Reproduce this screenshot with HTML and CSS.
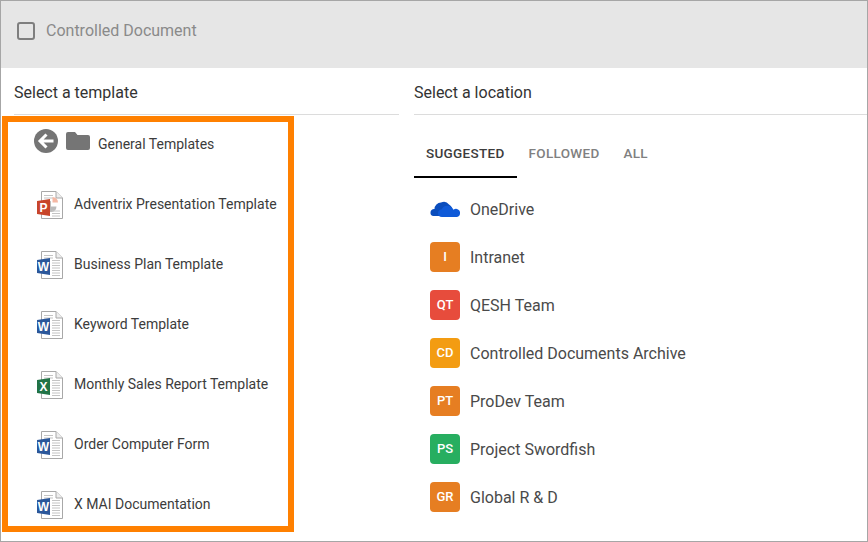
FILE: index.html
```html
<!DOCTYPE html>
<html lang="en">
<head>
<meta charset="utf-8">
<title>Controlled Document</title>
<link rel="stylesheet" href="styles.css">
</head>
<body>
<svg class="defs" width="0" height="0" aria-hidden="true">
  <defs>
    <symbol id="page" viewBox="0 0 26 28">
      <path d="M4.500.5H19L25.500 7V27.500H4.500Z" fill="#fff" stroke="#a8a8a8"/>
      <path d="M19 .5V7H25.500" fill="#eee" stroke="#a8a8a8"/>
      <path d="M7 4.500H16M7 7H16" stroke="#c4c4c4"/>
    </symbol>
    <symbol id="lines" viewBox="0 0 26 28">
      <path d="M15 9.500H23M15 12H23M15 14.500H23M15 17H23M15 19.500H23M15 22H23M15 24.500H23" stroke="#c4c4c4"/>
    </symbol>
  </defs>
</svg>
<main class="frame">
  <header class="top">
    <span class="checkbox"></span>
    <span class="top-label">Controlled Document</span>
  </header>
  <div class="columns">
    <section class="col-left">
      <h2 class="col-title">Select a template</h2>
      <div class="highlight">
        <div class="row row-head">
          <svg class="back" viewBox="0 0 24 24"><circle cx="12" cy="12" r="12" fill="#757575"/><path d="M19.500 12H7M12.500 5.500L6 12L12.500 18.500" fill="none" stroke="#fff" stroke-width="3"/></svg>
          <svg class="folder" viewBox="0 0 24 18"><path d="M2 0H9L11.500 3H22A2 2 0 0 1 24 5V16A2 2 0 0 1 22 18H2A2 2 0 0 1 0 16V2A2 2 0 0 1 2 0Z" fill="#757575"/></svg>
          <span class="row-text">General Templates</span>
        </div>
        <div class="row">
          <svg class="file" viewBox="0 0 26 28"><use href="#page"/><path d="M14 10A5.500 5.500 0 1 0 19.500 15.500H14Z" fill="#bbb"/><path d="M15.500 6A5.500 5.500 0 0 1 21 11.500H15.500Z" fill="#f4b8a4"/><path d="M15 20H23M15 22.500H23M15 25H23" stroke="#c4c4c4"/><path d="M0 10L13 8V25L0 23Z" fill="#c8452a"/><text class="glyph" x="6.500" y="21">P</text></svg>
          <span class="row-text">Adventrix Presentation Template</span>
        </div>
        <div class="row">
          <svg class="file" viewBox="0 0 26 28"><use href="#page"/><use href="#lines"/><path d="M0 9L13 7V24L0 22Z" fill="#2b579a"/><text class="glyph" x="6.500" y="20">W</text></svg>
          <span class="row-text">Business Plan Template</span>
        </div>
        <div class="row">
          <svg class="file" viewBox="0 0 26 28"><use href="#page"/><use href="#lines"/><path d="M0 9L13 7V24L0 22Z" fill="#2b579a"/><text class="glyph" x="6.500" y="20">W</text></svg>
          <span class="row-text">Keyword Template</span>
        </div>
        <div class="row">
          <svg class="file" viewBox="0 0 26 28"><use href="#page"/><use href="#lines"/><path d="M0 9L13 7V24L0 22Z" fill="#217346"/><text class="glyph" x="6.500" y="20">X</text></svg>
          <span class="row-text">Monthly Sales Report Template</span>
        </div>
        <div class="row">
          <svg class="file" viewBox="0 0 26 28"><use href="#page"/><use href="#lines"/><path d="M0 9L13 7V24L0 22Z" fill="#2b579a"/><text class="glyph" x="6.500" y="20">W</text></svg>
          <span class="row-text">Order Computer Form</span>
        </div>
        <div class="row">
          <svg class="file" viewBox="0 0 26 28"><use href="#page"/><use href="#lines"/><path d="M0 9L13 7V24L0 22Z" fill="#2b579a"/><text class="glyph" x="6.500" y="20">W</text></svg>
          <span class="row-text">X MAI Documentation</span>
        </div>
      </div>
    </section>
    <section class="col-right">
      <h2 class="col-title">Select a location</h2>
      <nav class="tabs">
        <span class="tab tab-active">Suggested</span>
        <span class="tab">Followed</span>
        <span class="tab">All</span>
      </nav>
      <ul class="sites">
        <li class="site">
          <svg class="onedrive" viewBox="0 0 30 18"><path d="M11 2.500A6.500 6.500 0 0 1 19 4.500A6 6 0 0 1 22 8L12 16H3.500A3.300 3.300 0 0 1 .5 12.500C.5 10 2.500 8.800 4.500 9A6.500 6.500 0 0 1 11 2.500Z" fill="#0a4dbd"/><path d="M12 17A4 4 0 0 1 8 13C8 10.500 10 9.300 11.500 9.500A6.500 6.500 0 0 1 23.500 9.800A4 4 0 0 1 30 13.500A3.500 3.500 0 0 1 27 17Z" fill="#0f5ad8"/></svg>
          <span class="site-name">OneDrive</span>
        </li>
        <li class="site"><span class="badge badge-orange">I</span><span class="site-name">Intranet</span></li>
        <li class="site"><span class="badge badge-red">QT</span><span class="site-name">QESH Team</span></li>
        <li class="site"><span class="badge badge-yellow">CD</span><span class="site-name">Controlled Documents Archive</span></li>
        <li class="site"><span class="badge badge-orange">PT</span><span class="site-name">ProDev Team</span></li>
        <li class="site"><span class="badge badge-green">PS</span><span class="site-name">Project Swordfish</span></li>
        <li class="site"><span class="badge badge-orange">GR</span><span class="site-name">Global R &amp; D</span></li>
      </ul>
    </section>
  </div>
</main>
</body>
</html>
```

FILE: styles.css
```css
* {
  box-sizing: border-box;
}

html,
body {
  margin: 0;
  padding: 0;
  background: #fff;
}

body {
  font-family: Roboto, "Liberation Sans", sans-serif;
  overflow: hidden;
}

.defs {
  position: absolute;
}

.frame {
  width: 868px;
  height: 542px;
  border: 1px solid #a6a6a6;
  display: flex;
  flex-direction: column;
  overflow: hidden;
}

.top {
  height: 67px;
  flex: none;
  background: #e6e6e6;
  display: flex;
  align-items: center;
  padding: 0 0 8px 16px;
}

.checkbox {
  width: 18px;
  height: 18px;
  border: 2px solid #7f7f7f;
  border-radius: 3px;
  margin-right: 11px;
}

.top-label {
  font-size: 16px;
  color: #8a8a8a;
}

.columns {
  flex: 1;
  display: flex;
  min-height: 0;
}

.col-left {
  width: 398px;
  flex: none;
  padding-left: 1px;
}

.col-right {
  flex: 1;
  padding-left: 15px;
}

.col-title {
  margin: 0;
  height: 47px;
  line-height: 49px;
  font-size: 16px;
  font-weight: 400;
  color: #333;
  border-bottom: 1px solid #dcdcdc;
}

.col-left .col-title {
  margin-left: 12px;
}

.highlight {
  width: 292px;
  height: 416px;
  margin-top: 1px;
  border: 6px solid #ff8000;
  display: flex;
  flex-direction: column;
  gap: 16px;
  padding: 0 0 0 29px;
}

.row {
  height: 44px;
  display: flex;
  align-items: center;
  flex: none;
}

.row-head {
  margin-left: -3px;
}

.back {
  width: 24px;
  height: 24px;
  margin-right: 8px;
  margin-top: -6px;
}

.folder {
  width: 24px;
  height: 18px;
  margin-right: 8px;
  margin-top: -6px;
}

.file {
  width: 26px;
  height: 28px;
  margin-right: 11px;
  margin-top: 2px;
  flex: none;
}

.glyph {
  font-family: "Liberation Sans", sans-serif;
  font-weight: 700;
  font-size: 12px;
  fill: #fff;
  text-anchor: middle;
}

.row-text {
  font-size: 14px;
  color: #3c3c3c;
  white-space: nowrap;
}

.tabs {
  display: flex;
  height: 63px;
}

.tab {
  padding: 0 12px;
  height: 63px;
  line-height: 77px;
  font-size: 13.5px;
  font-weight: 500;
  text-transform: uppercase;
  color: #808080;
  letter-spacing: 0.3px;
}

.tab-active {
  color: #3c3c3c;
  border-bottom: 2px solid #000;
}

.sites {
  list-style: none;
  margin: 7px 0 0;
  padding: 0 0 0 16px;
}

.site {
  height: 48px;
  display: flex;
  align-items: center;
}

.badge {
  width: 30px;
  height: 30px;
  border-radius: 4px;
  margin-right: 10px;
  flex: none;
  display: flex;
  align-items: center;
  justify-content: center;
  color: #fff;
  font-size: 13px;
  font-weight: 500;
  padding-bottom: 2px;
}

.badge-orange {
  background: #e67e22;
}

.badge-red {
  background: #e74c3c;
}

.badge-yellow {
  background: #f39c12;
}

.badge-green {
  background: #27ae60;
}

.onedrive {
  width: 30px;
  height: 18px;
  margin-right: 10px;
  flex: none;
}

.site-name {
  font-size: 16px;
  color: #4a4a4a;
}
```
